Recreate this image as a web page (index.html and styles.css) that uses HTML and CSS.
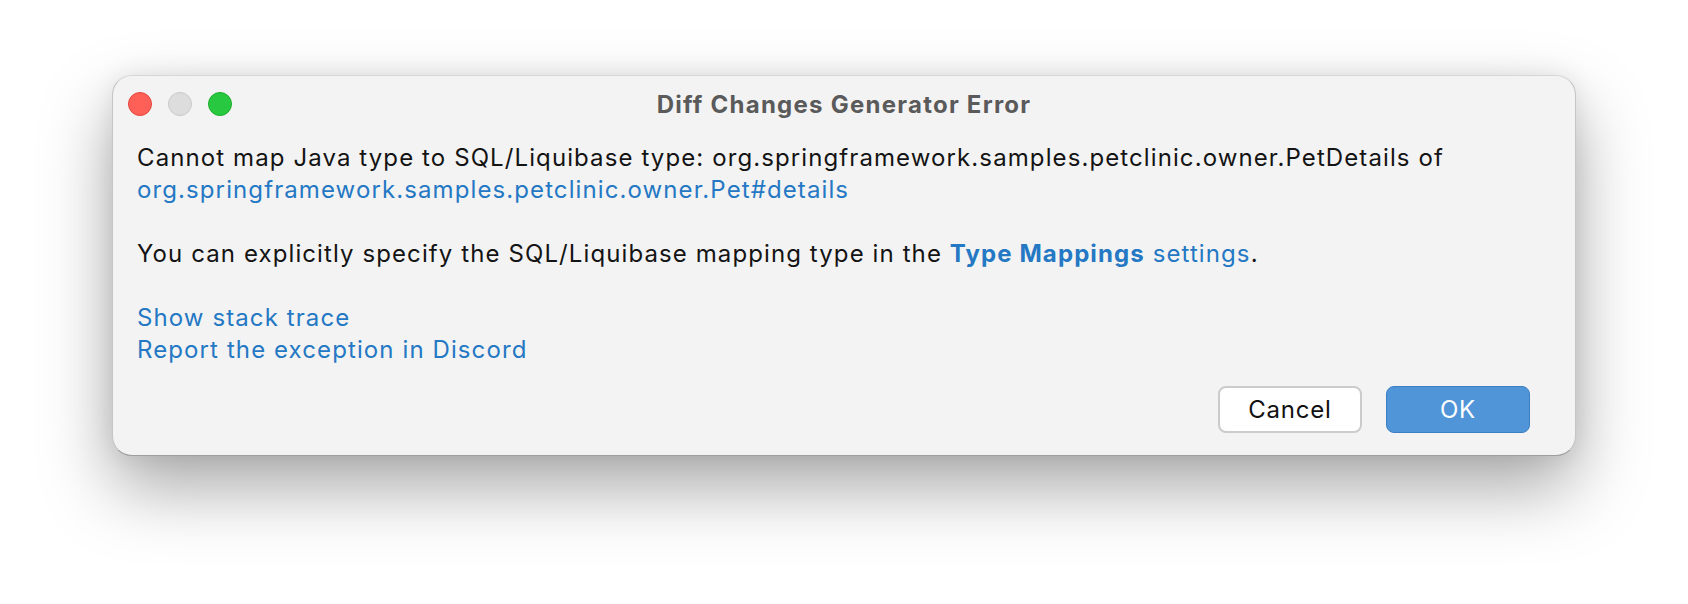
FILE: index.html
```html
<!DOCTYPE html>
<html lang="en">
<head>
    <meta charset="UTF-8">
    <title>Diff Changes Generator Error</title>
    <link rel="stylesheet" href="styles.css">
</head>
<body>
<div class="window">
    <div class="titlebar">
        <div class="lights">
            <span class="light close"></span>
            <span class="light minimize"></span>
            <span class="light zoom"></span>
        </div>
        <div class="title">Diff Changes Generator Error</div>
        <div></div>
    </div>

    <div class="content">
        <p class="message">
            Cannot map Java type to SQL/Liquibase type: org.springframework.samples.petclinic.owner.PetDetails of<br>
            <a class="link" href="#">org.springframework.samples.petclinic.owner.Pet#details</a>
        </p>
        <p class="message">
            You can explicitly specify the SQL/Liquibase mapping type in the <a class="link strong" href="#">Type Mappings</a> <a class="link" href="#">settings</a>.
        </p>
        <div class="actions">
            <a class="link" href="#">Show stack trace</a>
            <a class="link" href="#">Report the exception in Discord</a>
        </div>
    </div>

    <div class="footer">
        <button class="btn cancel">Cancel</button>
        <button class="btn ok">OK</button>
    </div>
</div>
</body>
</html>
```

FILE: styles.css
```css
html {
    background-color: #fff;
}

body {
    margin: 0;
    min-height: 604px;
    box-sizing: border-box;
    padding: 75px 112px 0;
    font-family: "Inter", "Liberation Sans", sans-serif;
}

.window {
    background-color: #f3f3f3;
    border: 1px solid #c4c4c4;
    border-top-color: #d6d6d6;
    border-bottom-color: #9e9e9e;
    border-radius: 20px;
    box-shadow: 0 32px 70px rgba(0, 0, 0, 0.34), 0 0 24px rgba(0, 0, 0, 0.08);
}

.titlebar {
    display: grid;
    grid-template-columns: 1fr auto 1fr;
    align-items: center;
    height: 56px;
    padding: 0 15px;
}

.lights {
    display: flex;
    gap: 16px;
}

.light {
    width: 22px;
    height: 22px;
    border-radius: 50%;
    border: 1px solid;
}

.close {
    background-color: #fe5f57;
    border-color: #e2463f;
}

.minimize {
    background-color: #dddddd;
    border-color: #c9c9c9;
}

.zoom {
    background-color: #28c840;
    border-color: #1dad2b;
}

.title {
    font-size: 24px;
    font-weight: bold;
    letter-spacing: 1.25px;
    color: #5a5a5a;
}

.content {
    padding: 10px 24px 0;
    font-size: 24px;
    line-height: 32px;
    letter-spacing: 1.1px;
    color: #141414;
}

.message {
    margin: 0 0 32px;
}

.link {
    color: #2478c4;
    text-decoration: none;
}

.strong {
    font-weight: bold;
}

.actions {
    display: flex;
    flex-direction: column;
    align-items: flex-start;
}

.footer {
    display: flex;
    justify-content: flex-end;
    gap: 24px;
    padding: 20px 45px 22px 0;
}

.btn {
    width: 144px;
    height: 47px;
    border-radius: 8px;
    font-family: inherit;
    font-size: 24px;
    letter-spacing: 0.8px;
}

.cancel {
    background-color: #fff;
    border: 2px solid #cbcbcb;
    color: #111;
}

.ok {
    background-color: #4f95d8;
    border: 1px solid #3c7fc2;
    color: #fff;
}
```
